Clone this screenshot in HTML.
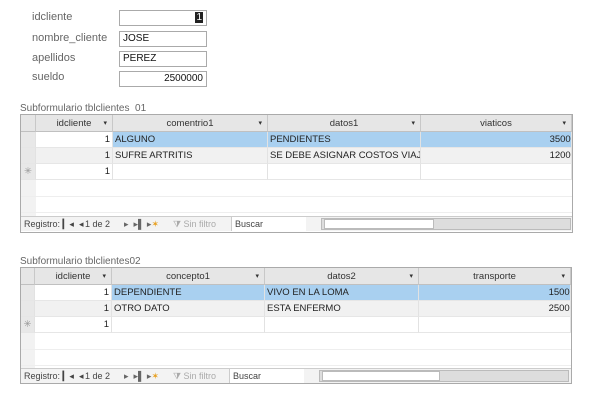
<!DOCTYPE html>
<html><head><meta charset="utf-8"><style>
*{margin:0;padding:0;box-sizing:border-box}
body{width:600px;height:400px;background:#fff;position:relative;overflow:hidden;font-family:"Liberation Sans",sans-serif;font-size:10px;color:#222}
.a{position:absolute}
.lbl{color:#666;font-size:11px}
.inp{border:1px solid #aaa;background:#fff;height:16px;font-size:10px;line-height:14px;padding:0 3px;color:#111}
.cap{color:#666;font-size:10px}
.tbl{border:1px solid #aaa;background:#fff}
.c{position:absolute;height:16px;line-height:16px;border-right:1px solid #e2e2e2;border-bottom:1px solid #e6e6e6;white-space:nowrap;overflow:hidden;padding:0 2px;font-size:9.5px}
.h{background:#e6e6e6;border-right:1px solid #c8c8c8;border-bottom:1px solid #c0c0c0;text-align:center;color:#333;height:17px;line-height:17px}
.h i{position:absolute;right:5px;font-style:normal;font-size:7px}
.r{text-align:right}
.cl span{position:absolute;right:-5px}
.sel{background:#e8e8e8}
.hl{background:#a9d0f0}
.alt{background:#f1f1f1}
.bl{position:absolute;height:1px;background:#eee}
.nav{position:absolute;height:15px;background:#f3f3f3;border-top:1px solid #ccc;font-size:9px;line-height:14px;color:#444}
</style></head><body>

<div class="a lbl" style="left:32px;top:11px">idcliente</div>
<div class="a lbl" style="left:32px;top:32px">nombre_cliente</div>
<div class="a lbl" style="left:32px;top:52px">apellidos</div>
<div class="a lbl" style="left:32px;top:71px">sueldo</div>
<div class="a inp" style="left:119px;top:10px;width:88px;text-align:right"><span style="background:#222;color:#fff;padding:0 1px">1</span></div>
<div class="a inp" style="left:119px;top:31px;width:88px">JOSE</div>
<div class="a inp" style="left:119px;top:51px;width:88px">PEREZ</div>
<div class="a inp" style="left:119px;top:71px;width:88px;text-align:right">2500000</div>

<div class="a cap" style="left:20px;top:103px">Subformulario tblclientes&nbsp; 01</div>
<div class="a tbl" style="left:20px;top:114px;width:553px;height:119px">
 <div class="c h" style="left:0;top:0;width:15px"></div>
 <div class="c h" style="left:15px;top:0;width:77px">idcliente<i>▾</i></div>
 <div class="c h" style="left:92px;top:0;width:155px">comentrio1<i>▾</i></div>
 <div class="c h" style="left:247px;top:0;width:153px">datos1<i>▾</i></div>
 <div class="c h" style="left:400px;top:0;width:151px">viaticos<i>▾</i></div>

 <div class="c sel" style="left:0;top:17px;width:15px"></div>
 <div class="c r" style="left:15px;top:17px;width:77px">1</div>
 <div class="c hl" style="left:92px;top:17px;width:155px">ALGUNO</div>
 <div class="c hl" style="left:247px;top:17px;width:153px">PENDIENTES</div>
 <div class="c hl cl" style="left:400px;top:17px;width:151px"><span>35000</span></div>

 <div class="c sel" style="left:0;top:33px;width:15px"></div>
 <div class="c r alt" style="left:15px;top:33px;width:77px">1</div>
 <div class="c alt" style="left:92px;top:33px;width:155px">SUFRE ARTRITIS</div>
 <div class="c alt" style="left:247px;top:33px;width:153px">SE DEBE ASIGNAR COSTOS VIAJE</div>
 <div class="c alt cl" style="left:400px;top:33px;width:151px"><span>12000</span></div>

 <div class="c sel" style="left:0;top:49px;width:15px;color:#999;text-align:center">✳</div>
 <div class="c r" style="left:15px;top:49px;width:77px">1</div>
 <div class="c" style="left:92px;top:49px;width:155px"></div>
 <div class="c" style="left:247px;top:49px;width:153px"></div>
 <div class="c" style="left:400px;top:49px;width:151px"></div>
 <div class="a" style="left:0;top:65px;width:15px;height:36px;background:#f2f2f2"></div>
 <div class="bl" style="left:0;top:81px;width:551px"></div>
 <div class="bl" style="left:0;top:97px;width:551px"></div>

 <div class="nav" style="left:0;top:101px;width:551px">
  <span class="a" style="left:3px">Registro: &#9614;◂ &nbsp;◂</span>
  <span class="a" style="left:64px">1 de 2</span>
  <span class="a" style="left:103px;color:#666">▸ &nbsp;▸▌ ▸<span style="color:#e8a020">✶</span></span>
  <span class="a" style="left:152px;color:#aaa">⧩ Sin filtro</span>
  <span class="a" style="left:210px;top:0;width:75px;height:14px;background:#fff;border-left:1px solid #ccc;padding-left:3px">Buscar</span>
  <span class="a" style="left:300px;top:1px;width:250px;height:12px;background:#ddd;border:1px solid #bbb"></span>
  <span class="a" style="left:303px;top:2px;width:110px;height:10px;background:#fff;border:1px solid #bbb"></span>
 </div>
</div>

<div class="a cap" style="left:20px;top:256px">Subformulario tblclientes02</div>
<div class="a tbl" style="left:20px;top:267px;width:552px;height:117px">
 <div class="c h" style="left:0;top:0;width:14px"></div>
 <div class="c h" style="left:14px;top:0;width:77px">idcliente<i>▾</i></div>
 <div class="c h" style="left:91px;top:0;width:153px">concepto1<i>▾</i></div>
 <div class="c h" style="left:244px;top:0;width:154px">datos2<i>▾</i></div>
 <div class="c h" style="left:398px;top:0;width:152px">transporte<i>▾</i></div>

 <div class="c sel" style="left:0;top:17px;width:14px"></div>
 <div class="c r" style="left:14px;top:17px;width:77px">1</div>
 <div class="c hl" style="left:91px;top:17px;width:153px">DEPENDIENTE</div>
 <div class="c hl" style="left:244px;top:17px;width:154px">VIVO EN LA LOMA</div>
 <div class="c hl cl" style="left:398px;top:17px;width:152px"><span>15000</span></div>

 <div class="c sel" style="left:0;top:33px;width:14px"></div>
 <div class="c r alt" style="left:14px;top:33px;width:77px">1</div>
 <div class="c alt" style="left:91px;top:33px;width:153px">OTRO DATO</div>
 <div class="c alt" style="left:244px;top:33px;width:154px">ESTA ENFERMO</div>
 <div class="c alt cl" style="left:398px;top:33px;width:152px"><span>25000</span></div>

 <div class="c sel" style="left:0;top:49px;width:14px;color:#999;text-align:center">✳</div>
 <div class="c r" style="left:14px;top:49px;width:77px">1</div>
 <div class="c" style="left:91px;top:49px;width:153px"></div>
 <div class="c" style="left:244px;top:49px;width:154px"></div>
 <div class="c" style="left:398px;top:49px;width:152px"></div>
 <div class="a" style="left:0;top:65px;width:14px;height:35px;background:#f2f2f2"></div>
 <div class="bl" style="left:0;top:81px;width:550px"></div>
 <div class="bl" style="left:0;top:97px;width:550px"></div>

 <div class="nav" style="left:0;top:100px;width:550px">
  <span class="a" style="left:3px">Registro: &#9614;◂ &nbsp;◂</span>
  <span class="a" style="left:64px">1 de 2</span>
  <span class="a" style="left:103px;color:#666">▸ &nbsp;▸▌ ▸<span style="color:#e8a020">✶</span></span>
  <span class="a" style="left:152px;color:#aaa">⧩ Sin filtro</span>
  <span class="a" style="left:208px;top:0;width:75px;height:14px;background:#fff;border-left:1px solid #ccc;padding-left:3px">Buscar</span>
  <span class="a" style="left:298px;top:1px;width:250px;height:12px;background:#ddd;border:1px solid #bbb"></span>
  <span class="a" style="left:301px;top:2px;width:118px;height:10px;background:#fff;border:1px solid #bbb"></span>
 </div>
</div>
</body></html>
